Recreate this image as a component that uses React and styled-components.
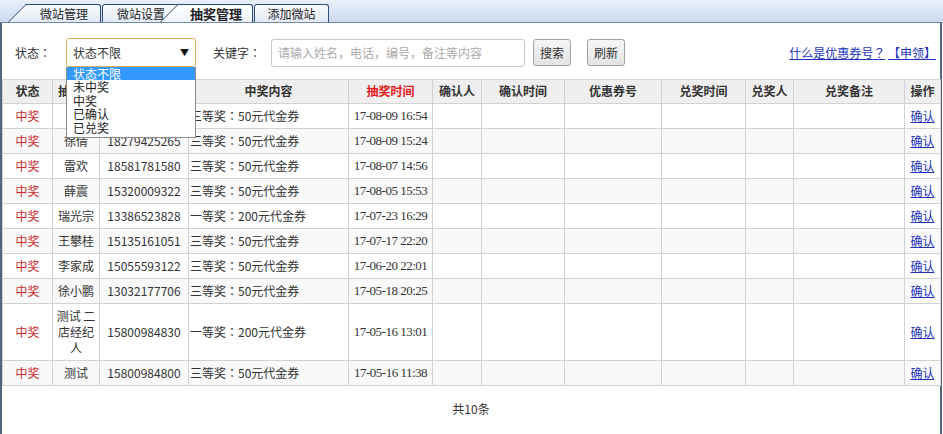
import styled, { createGlobalStyle } from 'styled-components'

const GlobalStyle = createGlobalStyle`
  html, body {
    margin: 0;
    padding: 0;
    background: #fff;
  }
  body {
    font-family: "Noto Sans CJK SC", "Noto Sans", sans-serif;
    font-size: 12px;
    color: #333;
  }
`

const tabs = [
  { label: '微站管理', width: 73, slant: true },
  { label: '微站设置', width: 78 },
  { label: '抽奖管理', width: 73, slant: true, active: true },
  { label: '添加微站', width: 75 },
]

const options = ['状态不限', '未中奖', '中奖', '已确认', '已兑奖']

const columns = [
  { title: '状态', width: 50 },
  { title: '抽奖人', width: 47 },
  { title: '电话', width: 89 },
  { title: '中奖内容', width: 160 },
  { title: '抽奖时间', width: 84, red: true },
  { title: '确认人', width: 49 },
  { title: '确认时间', width: 83 },
  { title: '优惠券号', width: 97 },
  { title: '兑奖时间', width: 84 },
  { title: '兑奖人', width: 48 },
  { title: '兑奖备注', width: 111 },
  { title: '操作', width: 36 },
]

const rows = [
  ['静', '18679425266', '三等奖', '50元代金券', '17-08-09 16:54'],
  ['徐倩', '18279425265', '三等奖', '50元代金券', '17-08-09 15:24'],
  ['雷欢', '18581781580', '三等奖', '50元代金券', '17-08-07 14:56'],
  ['薛震', '15320009322', '三等奖', '50元代金券', '17-08-05 15:53'],
  ['瑞光宗', '13386523828', '一等奖', '200元代金券', '17-07-23 16:29'],
  ['王攀桂', '15135161051', '三等奖', '50元代金券', '17-07-17 22:20'],
  ['李家成', '15055593122', '三等奖', '50元代金券', '17-06-20 22:01'],
  ['徐小鹏', '13032177706', '三等奖', '50元代金券', '17-05-18 20:25'],
  ['测试 二店经纪人', '15800984830', '一等奖', '200元代金券', '17-05-16 13:01'],
  ['测试', '15800984800', '三等奖', '50元代金券', '17-05-16 11:38'],
]

function App() {
  return (
    <>
      <GlobalStyle />
      <TabBar>
        {tabs.map((t, i) => (
          <Tab key={t.label} width={t.width} slant={t.slant} active={t.active} z={t.active ? 5 : 4 - i}>
            {t.label}
          </Tab>
        ))}
      </TabBar>
      <Frame>
        <Filters>
          <Label>状态<Colon>：</Colon></Label>
          <SelectWrap>
            <Select>
              <span>状态不限</span>
              <Arrow>▼</Arrow>
            </Select>
            <OptionList>
              {options.map((o, i) => (
                <Option key={o} selected={i === 0}>{o}</Option>
              ))}
            </OptionList>
          </SelectWrap>
          <Label gap={17}>关键字<Colon>：</Colon></Label>
          <SearchInput placeholder='请输入姓名，电话，编号，备注等内容' />
          <Button gap={8}>搜索</Button>
          <Button gap={16}>刷新</Button>
          <Links>
            <a href='/'>什么是优惠券号<Colon>？</Colon></a> <a href='/'>【申领】</a>
          </Links>
        </Filters>

        <Table>
          <colgroup>
            {columns.map((c) => (
              <col key={c.title} style={{ width: c.width }} />
            ))}
          </colgroup>
          <thead>
            <tr>
              {columns.map((c) => (
                <Th key={c.title} red={c.red}>{c.title}</Th>
              ))}
            </tr>
          </thead>
          <tbody>
            {rows.map((r, i) => (
              <Row key={i} even={i % 2 === 1}>
                <Status>中奖</Status>
                <Td>{r[0]}</Td>
                <Td>{r[1]}</Td>
                <Prize>
                  {r[2]}
                  <Colon>：</Colon>
                  {r[3]}
                </Prize>
                <DateCell>{r[4]}</DateCell>
                <Td />
                <Td />
                <Td />
                <Td />
                <Td />
                <Td />
                <Td>
                  <ActionLink href='/'>确认</ActionLink>
                </Td>
              </Row>
            ))}
          </tbody>
        </Table>
        <Footer>共10条</Footer>
      </Frame>
    </>
  )
}
export default App

const TabBar = styled.div`
  display: flex;
  align-items: flex-end;
  height: 22px;
  padding-left: 28px;
  background: linear-gradient(#e9f0f9, #ccdaee);
  border-bottom: 1px solid #7088ae;
`

const Tab = styled.div`
  position: relative;
  z-index: ${(p) => p.z};
  box-sizing: border-box;
  width: ${(p) => p.width}px;
  height: 18px;
  margin-left: ${(p) => (p.slant ? 0 : 1)}px;
  border: 1px solid #2d4d80;
  border-bottom: none;
  border-left-style: ${(p) => (p.slant ? 'none' : 'solid')};
  border-radius: ${(p) => (p.slant ? '0 3px 0 0' : '3px 3px 0 0')};
  background: ${(p) =>
    p.active
      ? 'linear-gradient(#ffffff, #eef3fa)'
      : 'linear-gradient(#fbfcfe, #e2eaf5)'};
  font-size: ${(p) => (p.active ? 13 : 12)}px;
  font-weight: ${(p) => (p.active ? 700 : 400)};
  color: #222;
  line-height: 17px;
  text-align: center;

  &::before {
    content: '';
    display: ${(p) => (p.slant ? 'block' : 'none')};
    position: absolute;
    z-index: -1;
    left: -20px;
    top: -1px;
    bottom: 0;
    width: 24px;
    border-left: 1px solid #2d4d80;
    border-top: 1px solid #2d4d80;
    background: inherit;
    transform: skewX(-45deg);
    transform-origin: bottom left;
  }
`

const Frame = styled.div`
  width: 938px;
  min-height: 411px;
  border-left: 2px solid #55657e;
  border-right: 2px solid #55657e;
`

const Filters = styled.div`
  display: flex;
  align-items: center;
  height: 29px;
  padding: 15px 4px 12px 13px;
`

const Label = styled.span`
  margin-left: ${(p) => p.gap || 0}px;
  color: #333;
  white-space: nowrap;
`

/* full-width punctuation centred, as the original page's font draws it */
const Colon = styled.span`
  font-family: "Noto Sans CJK TC", "Noto Sans CJK SC", sans-serif;
`

const SelectWrap = styled.div`
  position: relative;
  margin-left: 15px;
`

const Select = styled.div`
  box-sizing: border-box;
  display: flex;
  align-items: center;
  justify-content: space-between;
  width: 130px;
  height: 29px;
  padding: 0 6px 0 6px;
  border: 1px solid #dcae5e;
  border-radius: 3px;
  background: #fff;
  color: #333;
`

const Arrow = styled.span`
  font-size: 9px;
  color: #111;
`

const OptionList = styled.div`
  position: absolute;
  top: 29px;
  left: 0;
  z-index: 10;
  box-sizing: border-box;
  width: 130px;
  height: 71px;
  border: 1px solid #8a8a8a;
  border-top: none;
  background: #fff;
`

const Option = styled.div`
  height: 13.4px;
  line-height: 13px;
  padding-left: 6px;
  font-size: 12px;
  color: ${(p) => (p.selected ? '#fff' : '#222')};
  background: ${(p) => (p.selected ? '#3399ff' : 'transparent')};
`

const SearchInput = styled.input`
  box-sizing: border-box;
  width: 254px;
  height: 28px;
  margin-left: 10px;
  padding: 0 6px;
  border: 1px solid #c8c8c8;
  border-radius: 3px;
  font-family: inherit;
  font-size: 12px;
  color: #333;
  outline: none;
  &::placeholder {
    color: #aaa;
  }
`

const Button = styled.button`
  box-sizing: border-box;
  height: 27px;
  margin-left: ${(p) => p.gap}px;
  padding: 0 6px;
  border: 1px solid #a0a0a0;
  border-radius: 3px;
  background: linear-gradient(#f6f6f6, #e4e4e4);
  font-family: inherit;
  font-size: 12px;
  color: #333;
`

const Links = styled.div`
  margin-left: auto;
  white-space: nowrap;
  a {
    color: #2233bb;
    text-decoration: underline;
  }
`

const Table = styled.table`
  width: 938px;
  table-layout: fixed;
  border-collapse: collapse;
`

const Th = styled.th`
  padding: 3px 2px 4px;
  border: 1px solid #d2d2d2;
  background: #efefef;
  line-height: 16px;
  font-weight: 700;
  color: ${(p) => (p.red ? '#e31b1b' : '#333')};
  text-align: center;
`

const Row = styled.tr`
  background: ${(p) => (p.even ? '#f9f9f9' : '#fff')};
`

const Td = styled.td`
  padding: 4px 2px;
  border: 1px solid #d2d2d2;
  line-height: 16px;
  text-align: center;
  vertical-align: middle;
  color: #333;
`

const Status = styled(Td)`
  color: #cc2b2b;
`

const Prize = styled(Td)`
  padding-left: 1px;
  text-align: left;
  white-space: nowrap;
`

const DateCell = styled(Td)`
  font-family: "Liberation Serif", serif;
  font-size: 13px;
  letter-spacing: -0.5px;
`

const ActionLink = styled.a`
  color: #2233bb;
  text-decoration: underline;
`

const Footer = styled.div`
  padding-top: 15px;
  line-height: 16px;
  text-align: center;
  color: #333;
`
